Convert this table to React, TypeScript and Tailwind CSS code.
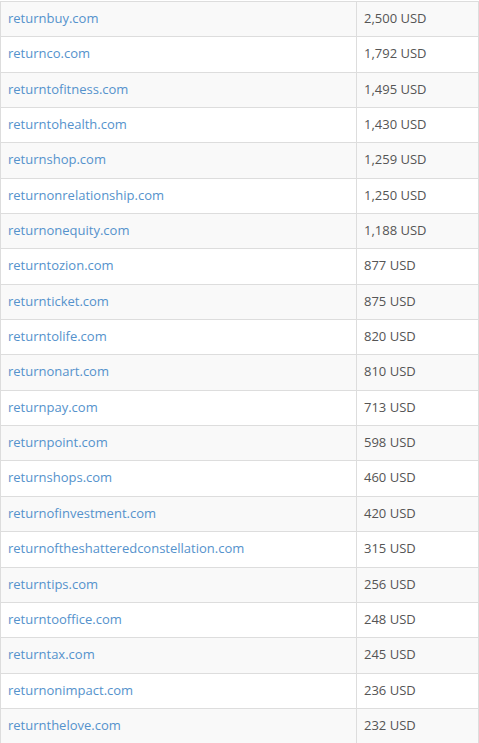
const rows: [string, string][] = [
  ["returnbuy.com", "2,500 USD"],
  ["returnco.com", "1,792 USD"],
  ["returntofitness.com", "1,495 USD"],
  ["returntohealth.com", "1,430 USD"],
  ["returnshop.com", "1,259 USD"],
  ["returnonrelationship.com", "1,250 USD"],
  ["returnonequity.com", "1,188 USD"],
  ["returntozion.com", "877 USD"],
  ["returnticket.com", "875 USD"],
  ["returntolife.com", "820 USD"],
  ["returnonart.com", "810 USD"],
  ["returnpay.com", "713 USD"],
  ["returnpoint.com", "598 USD"],
  ["returnshops.com", "460 USD"],
  ["returnofinvestment.com", "420 USD"],
  ["returnoftheshatteredconstellation.com", "315 USD"],
  ["returntips.com", "256 USD"],
  ["returntooffice.com", "248 USD"],
  ["returntax.com", "245 USD"],
  ["returnonimpact.com", "236 USD"],
  ["returnthelove.com", "232 USD"],
];

export default function App() {
  return (
    <div className="bg-white pt-px font-['Open_Sans',sans-serif] text-[13px]">
      <table className="w-[479px] border-collapse border border-[#dddddd]">
        <tbody>
          {rows.map(([domain, price], i) => (
            <tr key={domain} className={i % 2 === 0 ? "bg-[#f9f9f9]" : "bg-white"}>
              <td className="w-[356px] border border-[#dddddd] pl-[7px] pr-2 pt-[7px] pb-[9px] leading-[18.35px]">
                <a href="#" className="text-[#5592cc]">
                  {domain}
                </a>
              </td>
              <td className="border border-[#dddddd] pl-[7px] pr-2 pt-[7px] pb-[9px] leading-[18.35px] text-[#555555]">
                {price}
              </td>
            </tr>
          ))}
        </tbody>
      </table>
    </div>
  );
}
